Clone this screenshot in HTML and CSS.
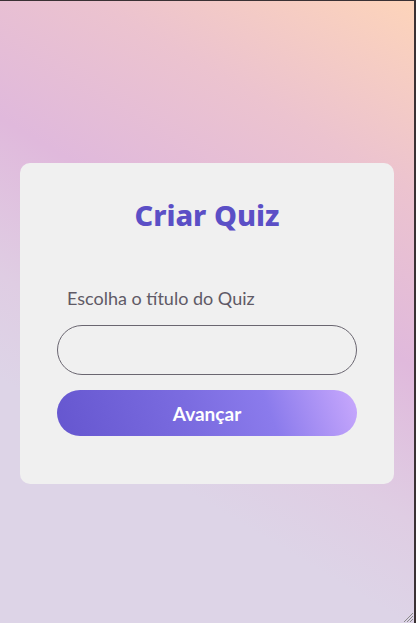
FILE: index.html
```html
<!DOCTYPE html>
<html lang="pt">
<head>
<meta charset="utf-8">
<title>Criar Quiz</title>
<link rel="stylesheet" href="styles.css">
</head>
<body>
<main class="page">
  <section class="card">
    <h1 class="title">Criar Quiz</h1>
    <form class="form">
      <label class="label" for="titulo">Escolha o título do Quiz</label>
      <input class="input" id="titulo" type="text">
      <button class="btn" type="button">Avançar</button>
    </form>
  </section>
  <svg class="grip" width="12" height="12" viewBox="0 0 12 12">
    <path d="M11 2 L2 11 M11 5 L5 11 M11 8 L8 11" stroke="#8a8a8a" stroke-width="1"/>
  </svg>
</main>
</body>
</html>
```
FILE: styles.css
```css
* { box-sizing: border-box; }
html, body { margin: 0; padding: 0; }
body {
  width: 416px;
  height: 623px;
  border-top: 1px solid #3a3134;
  border-right: 2px solid #3a3134;
  overflow: hidden;
}
.page {
  position: relative;
  height: 622px;
  background: linear-gradient(211deg, #fdd4ba 0%, #ecc3cf 22%, #e0b9dc 42%, #dfcde3 60%, #ddd4e7 72%, #ddd4e7 100%);
  display: flex;
  justify-content: center;
  padding-top: 162px;
}
.card {
  width: 374px;
  height: 321px;
  background: #f0f0f0;
  border-radius: 10px;
  padding: 0 37px;
}
.title {
  margin: 35px 0 0;
  text-align: center;
  font-family: "Noto Sans", sans-serif;
  font-weight: 800;
  font-size: 29px;
  line-height: 34px;
  color: #5b4fc6;
}
.form {
  display: flex;
  flex-direction: column;
  margin-top: 55px;
}
.label {
  font-family: Lato, sans-serif;
  font-size: 18px;
  line-height: 22px;
  color: #5f5a66;
  padding-left: 10px;
}
.input {
  margin-top: 16px;
  height: 50px;
  border: 1px solid #6a6670;
  border-radius: 25px;
  background: #f0f0f0;
  outline: none;
}
.btn {
  margin-top: 15px;
  height: 46px;
  border: none;
  border-radius: 23px;
  background: linear-gradient(70deg, #6556cf 0%, #7b6ce0 45%, #8b7bec 70%, #c9a9fd 100%);
  color: #fff;
  font-family: Lato, sans-serif;
  font-weight: 700;
  font-size: 19px;
}
.grip {
  position: absolute;
  right: 0;
  bottom: 0;
}
```
